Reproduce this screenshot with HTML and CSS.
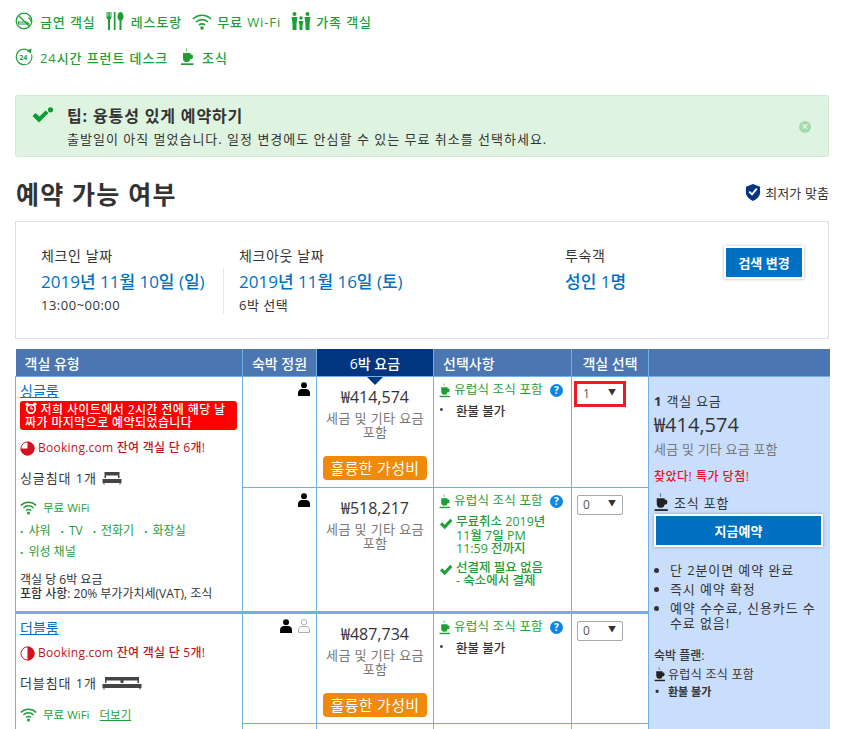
FILE: index.html
```html
<!DOCTYPE html>
<html lang="ko">
<head>
    <meta charset="UTF-8">
    <meta name="viewport" content="width=device-width, initial-scale=1.0">
    <title>예약 가능 여부</title>
    <link rel="stylesheet" href="styles.css">
</head>
<body>
    <svg class="sprites" width="0" height="0">
        <symbol id="i-cup" viewBox="0 0 14 18">
            <path d="M6 0.5c-1 1.2 1 1.6 0 3" fill="none" stroke="currentColor" stroke-width="0.8"/>
            <path d="M2.5 5h7.5v1.500h1.300c1.600 0 1.600 4.500 0 4.500h-1.400c-0.400 2-1.400 3-2.900 3h-1.500c-1.800 0-3-1.500-3-4z"/>
            <rect x="0.500" y="15.300" width="12.500" height="1.700"/>
        </symbol>
        <symbol id="i-check" viewBox="0 0 16 14">
            <path d="M1 7.500l2.500-2.500 3 3 6.500-7 2.500 2.500-9 9.500z"/>
        </symbol>
        <symbol id="i-person" viewBox="0 0 12 14">
            <circle cx="6" cy="3.200" r="3"/>
            <path d="M0 14v-3c0-2.500 2-4 4-4h4c2 0 4 1.500 4 4v3z"/>
        </symbol>
        <symbol id="i-wifi" viewBox="0 0 20 17">
            <path d="M1 6c5-5 13-5 18 0M4 9c3.500-3.300 8.500-3.300 12 0M7 12c2-1.600 4-1.600 6 0" fill="none" stroke="currentColor" stroke-width="1.700"/>
            <circle cx="10" cy="15" r="1.800"/>
        </symbol>
    </svg>

    <div class="page">
        <div class="facilities">
            <span class="facility">
                <svg class="fac-icon" viewBox="0 0 18 18"><circle cx="9" cy="9" r="7.800" fill="none" stroke="currentColor" stroke-width="1.200"/><path d="M3.500 3.500l11 11" stroke="currentColor" stroke-width="1.200"/><path d="M3.500 10h8.500l2 2h-10.500zM13 6c2 0 2.500 1.500 2.500 3.500" fill="none" stroke="currentColor" stroke-width="1.100"/></svg>
                <span>금연 객실</span>
            </span>
            <span class="facility">
                <svg class="fac-icon" viewBox="0 0 18 18"><path d="M0.500 0v5c0 1.500 1 2 1.500 2.500v10.500h2v-10.500c.5-.5 1.500-1 1.500-2.500v-5h-1v4.500h-.7v-4.500h-1.600v4.500h-.7v-4.500zM7.800 0h1.700v18h-1.700zM14.500 0c2 0 3 2.500 3 5 0 2-1 3-2 3.500v9.500h-2v-9.500c-1-.5-2-1.500-2-3.500 0-2.500 1-5 3-5z"/></svg>
                <span>레스토랑</span>
            </span>
            <span class="facility tight">
                <svg class="fac-icon fac-wifi"><use href="#i-wifi"/></svg>
                <span>무료 Wi-Fi</span>
            </span>
            <span class="facility tight">
                <svg class="fac-icon fac-family" viewBox="0 0 20 18"><circle cx="3.500" cy="2" r="2"/><circle cx="10" cy="6" r="1.800"/><circle cx="16.500" cy="2" r="2"/><path d="M0.500 5h6l-1 7v6h-4v-6zM7.500 9h5l-1 4.500v4.500h-3v-4.500zM13.500 5h6l-1 7v6h-4v-6z"/></svg>
                <span>가족 객실</span>
            </span>
            <span class="facility">
                <svg class="fac-icon" viewBox="0 0 18 18"><path d="M13.500 2.500a7.800 7.800 0 1 0 3 4" fill="none" stroke="currentColor" stroke-width="1.100"/><path d="M11.500 2.800l5-2.300-.5 5z"/><text class="fac-24" x="4.300" y="11.500">24</text></svg>
                <span>24시간 프런트 데스크</span>
            </span>
            <span class="facility">
                <svg class="fac-icon fac-cup"><use href="#i-cup"/></svg>
                <span>조식</span>
            </span>
        </div>

        <div class="tip">
            <svg class="tip-check" viewBox="0 0 22 16"><path d="M0.500 9l3-3 4 3.500 6-6 3 2.500-9.500 9.500z"/><circle cx="18.500" cy="2.800" r="2.600"/></svg>
            <div class="tip-text">
                <strong>팁: 융통성 있게 예약하기</strong>
                <p>출발일이 아직 멀었습니다. 일정 변경에도 안심할 수 있는 무료 취소를 선택하세요.</p>
            </div>
            <span class="tip-close">×</span>
        </div>

        <div class="avail-head">
            <h1>예약 가능 여부</h1>
            <span class="best-price">
                <svg viewBox="0 0 16 18" width="16" height="17"><path d="M8 0l7.500 3v6c0 4-3.500 7-7.500 9-4-2-7.500-5-7.500-9v-6z" fill="#003580"/><path d="M4 8l3 3 5-6" fill="none" stroke="#fff" stroke-width="2"/></svg>
                <span>최저가 맞춤</span>
            </span>
        </div>

        <div class="search-box">
            <div class="search-col col-in">
                <div class="search-label">체크인 날짜</div>
                <div class="search-value">2019년 11월 10일 (일)</div>
                <div class="search-note">13:00~00:00</div>
            </div>
            <div class="search-col col-out">
                <div class="search-label">체크아웃 날짜</div>
                <div class="search-value">2019년 11월 16일 (토)</div>
                <div class="search-note">6박 선택</div>
            </div>
            <div class="search-col col-guest">
                <div class="search-label">투숙객</div>
                <div class="search-value">성인 1명</div>
            </div>
            <button class="change-btn">검색 변경</button>
        </div>

        <table class="rooms">
            <colgroup>
                <col class="c-type"><col class="c-occ"><col class="c-price"><col class="c-opt"><col class="c-sel"><col class="c-book">
            </colgroup>
            <thead>
                <tr>
                    <th>객실 유형</th>
                    <th class="th-center">숙박 정원</th>
                    <th class="th-price">6박 요금</th>
                    <th>선택사항</th>
                    <th class="th-center">객실 선택</th>
                    <th></th>
                </tr>
            </thead>
            <tbody>
                <tr class="row-a">
                    <td class="room-cell" rowspan="2">
                        <a class="room-name" href="#">싱글룸</a>
                        <div class="urgent">
                            <svg viewBox="0 0 14 14" width="12" height="12"><circle cx="7" cy="8" r="5" fill="none" stroke="#fff" stroke-width="2"/><path d="M7 5v3h2.500" fill="none" stroke="#fff" stroke-width="1.300"/><circle cx="2.500" cy="2.500" r="2" fill="#fff"/><circle cx="11.500" cy="2.500" r="2" fill="#fff"/></svg>
                            저희 사이트에서 2시간 전에 해당 날짜가 마지막으로 예약되었습니다
                        </div>
                        <div class="left-rooms">
                            <svg viewBox="0 0 16 16" width="15" height="15"><circle cx="8" cy="8" r="7" fill="#fff" stroke="#d4111e"/><path d="M8 8v-7.500a7.500 7.500 0 1 1-7.500 7.500z" fill="#d4111e"/></svg>
                            <span>Booking.com 잔여 객실 단 6개!</span>
                        </div>
                        <div class="bed">
                            <span>싱글침대 1개</span>
                            <svg viewBox="0 0 20 14" width="20" height="14"><path d="M2.500 1h15v6h-1.500v-2.500h-12v2.500h-1.500z"/><path d="M0.500 8h19v4h-1v1.500h-1v-1.500h-15v1.500h-1v-1.500h-1z"/></svg>
                        </div>
                        <div class="wifi">
                            <svg class="wifi-icon"><use href="#i-wifi"/></svg>
                            <span>무료 WiFi</span>
                        </div>
                        <ul class="amenities">
                            <li>샤워</li><li>TV</li><li>전화기</li><li>화장실</li><li>위성 채널</li>
                        </ul>
                        <div class="rate-note">
                            객실 당 6박 요금<br>
                            <b>포함 사항:</b> 20% 부가가치세(VAT), 조식
                        </div>
                    </td>
                    <td class="occ"><svg class="person"><use href="#i-person"/></svg></td>
                    <td class="price active">
                        <div class="price-val">₩414,574</div>
                        <div class="price-tax">세금 및 기타 요금 포함</div>
                        <div class="deal">훌륭한 가성비</div>
                    </td>
                    <td class="opt">
                        <div class="breakfast">
                            <svg class="cup"><use href="#i-cup"/></svg>
                            <span>유럽식 조식 포함</span>
                            <span class="help">?</span>
                        </div>
                        <div class="no-refund">환불 불가</div>
                    </td>
                    <td class="sel">
                        <div class="sel-mark"><div class="picker"><span>1</span><i>▼</i></div></div>
                    </td>
                    <td class="book" rowspan="4">
                        <div class="book-count"><b>1</b> 객실 요금</div>
                        <div class="book-price">₩414,574</div>
                        <div class="book-tax">세금 및 기타 요금 포함</div>
                        <div class="book-deal">찾았다! 특가 당첨!</div>
                        <div class="book-meal">
                            <svg class="cup-lg"><use href="#i-cup"/></svg>
                            <span>조식 포함</span>
                        </div>
                        <button class="book-btn">지금예약</button>
                        <ul class="book-points">
                            <li>단 2분이면 예약 완료</li>
                            <li>즉시 예약 확정</li>
                            <li>예약 수수료, 신용카드 수수료 없음!</li>
                        </ul>
                        <div class="plan-title">숙박 플랜:</div>
                        <div class="plan-meal">
                            <svg class="cup"><use href="#i-cup"/></svg>
                            <span>유럽식 조식 포함</span>
                        </div>
                        <div class="plan-refund">환불 불가</div>
                    </td>
                </tr>
                <tr class="row-b">
                    <td class="occ"><svg class="person"><use href="#i-person"/></svg></td>
                    <td class="price">
                        <div class="price-val">₩518,217</div>
                        <div class="price-tax">세금 및 기타 요금 포함</div>
                    </td>
                    <td class="opt">
                        <div class="breakfast">
                            <svg class="cup"><use href="#i-cup"/></svg>
                            <span>유럽식 조식 포함</span>
                            <span class="help">?</span>
                        </div>
                        <div class="perk"><svg class="check"><use href="#i-check"/></svg><span>무료취소 2019년<br>11월 7일 PM<br>11:59 전까지</span></div>
                        <div class="perk"><svg class="check"><use href="#i-check"/></svg><span>선결제 필요 없음<br>- 숙소에서 결제</span></div>
                    </td>
                    <td class="sel"><div class="picker"><span>0</span><i>▼</i></div></td>
                </tr>
                <tr class="row-c">
                    <td class="room-cell" rowspan="2">
                        <a class="room-name" href="#">더블룸</a>
                        <div class="left-rooms">
                            <svg viewBox="0 0 16 16" width="15" height="15"><circle cx="8" cy="8" r="7" fill="#fff" stroke="#d4111e"/><path d="M8 .5a7.500 7.500 0 0 1 0 15z" fill="#d4111e"/></svg>
                            <span>Booking.com 잔여 객실 단 5개!</span>
                        </div>
                        <div class="bed">
                            <span>더블침대 1개</span>
                            <svg viewBox="0 0 40 14" width="40" height="14"><path d="M3 1h34v6h-1.500v-2.500h-14v2.500h-3v-2.500h-14v2.500h-1.500z"/><path d="M0.500 8h39v4h-1v1.500h-1v-1.500h-35v1.500h-1v-1.500h-1z"/></svg>
                        </div>
                        <div class="wifi">
                            <svg class="wifi-icon"><use href="#i-wifi"/></svg>
                            <span>무료 WiFi</span>
                            <a class="more" href="#">더보기</a>
                        </div>
                    </td>
                    <td class="occ">
                        <svg class="person"><use href="#i-person"/></svg>
                        <svg class="person person-empty" viewBox="0 0 12 14"><circle cx="6" cy="3.200" r="2.700"/><path d="M0.500 13.500v-2.500c0-2.300 1.500-3.500 3.500-3.500h4c2 0 3.500 1.200 3.500 3.500v2.500z"/></svg>
                    </td>
                    <td class="price">
                        <div class="price-val">₩487,734</div>
                        <div class="price-tax">세금 및 기타 요금 포함</div>
                        <div class="deal">훌륭한 가성비</div>
                    </td>
                    <td class="opt">
                        <div class="breakfast">
                            <svg class="cup"><use href="#i-cup"/></svg>
                            <span>유럽식 조식 포함</span>
                            <span class="help">?</span>
                        </div>
                        <div class="no-refund">환불 불가</div>
                    </td>
                    <td class="sel"><div class="picker"><span>0</span><i>▼</i></div></td>
                </tr>
                <tr class="row-d">
                    <td class="occ"></td>
                    <td class="price"></td>
                    <td class="opt"></td>
                    <td class="sel"></td>
                </tr>
            </tbody>
        </table>
    </div>
</body>
</html>
```

FILE: styles.css
```css
html, body {
    margin: 0;
    height: 729px;
    overflow: hidden;
    background: #fff;
}
body {
    font-family: "Open Sans", "Noto Sans CJK KR", sans-serif;
    font-size: 13px;
    color: #333;
}
.sprites {
    position: absolute;
}
.page {
    padding: 0 14px 0 15px;
}

/* facilities */
.facilities {
    display: flex;
    flex-wrap: wrap;
    width: 400px;
    padding-top: 3px;
    color: #1f9e36;
    font-size: 13px;
    font-weight: 500;
    letter-spacing: 0.9px;
}
.facility {
    display: flex;
    align-items: center;
    gap: 7px;
    height: 36px;
    margin-right: 10px;
}
.facility.tight {
    gap: 5px;
}
.fac-icon {
    width: 18px;
    height: 18px;
    fill: #1f9e36;
}
.fac-wifi {
    width: 20px;
    height: 17px;
}
.fac-family {
    width: 20px;
}
.fac-cup {
    width: 15px;
    height: 18px;
    margin-left: 2px;
}
.fac-24 {
    font-size: 7px;
    font-weight: 700;
    letter-spacing: 0;
}

/* tip */
.tip {
    display: flex;
    align-items: flex-start;
    height: 60px;
    margin-top: 20px;
    background: #dff4e0;
    border: 1px solid #cfe9d1;
    border-radius: 3px;
}
.tip-check {
    width: 22px;
    height: 16px;
    margin: 11px 13px 0 16px;
    fill: #0d9b33;
}
.tip-text {
    flex: 1;
    padding-top: 8px;
}
.tip-text strong {
    display: block;
    font-size: 16px;
    line-height: 24px;
    font-weight: 700;
    letter-spacing: 0.85px;
    color: #333;
}
.tip-text p {
    margin: 2px 0 0;
    font-size: 13px;
    line-height: 18px;
    letter-spacing: 1px;
}
.tip-close {
    width: 12px;
    height: 12px;
    margin: 25px 17px 0 0;
    border-radius: 50%;
    background: #a5d8ac;
    color: #dff4e0;
    font-size: 12px;
    font-weight: 700;
    line-height: 12px;
    text-align: center;
}

/* heading */
.avail-head {
    display: flex;
    align-items: center;
    justify-content: space-between;
    height: 64px;
}
.avail-head h1 {
    margin: 7px 0 0 1px;
    font-size: 25px;
    font-weight: 700;
    letter-spacing: 1.200px;
    color: #333;
}
.best-price {
    display: flex;
    align-items: center;
    gap: 4px;
    margin-top: 7px;
    font-size: 13px;
    letter-spacing: 0.1px;
}

/* search summary */
.search-box {
    display: flex;
    align-items: flex-start;
    height: 116px;
    background: #fff;
    border: 1px solid #dedede;
}
.search-col {
    padding-top: 24px;
}
.col-in {
    width: 182px;
    padding-left: 25px;
    height: 66px;
}
.col-out {
    width: 326px;
    padding-left: 15px;
    border-left: 1px solid #e6e6e6;
    margin-top: 46px;
    padding-top: 0;
}
.col-out .search-label {
    margin-top: -22px;
}
.col-guest {
    width: 159px;
}
.search-label {
    font-size: 14px;
    line-height: 20px;
    letter-spacing: 0.6px;
}
.search-value {
    margin-top: 5px;
    font-size: 17px;
    line-height: 22px;
    color: #0071c2;
    font-weight: 500;
}
.search-note {
    margin-top: 3px;
    font-size: 13px;
    line-height: 18px;
    letter-spacing: 0.5px;
}
.change-btn, .book-btn {
    background: #0071c2;
    color: #fff;
    border: 2px solid #fff;
    box-shadow: 0 0 3px rgba(0,0,0,0.3);
    font-family: inherit;
    font-weight: 700;
    cursor: pointer;
}
.change-btn {
    width: 80px;
    height: 33px;
    margin-top: 24px;
    padding: 0;
    font-size: 13px;
}

/* room table */
.rooms {
    width: 814px;
    margin-top: 10px;
    table-layout: fixed;
    border-collapse: collapse;
}
.c-type { width: 227px; }
.c-occ { width: 74px; }
.c-price { width: 117px; }
.c-opt { width: 138px; }
.c-sel { width: 77px; }
.c-book { width: 181px; }
.rooms th {
    height: 27px;
    padding: 0 0 0 9px;
    background: #4b76b1;
    border: 1px solid #6fb0ea;
    border-top: none;
    color: #fff;
    font-size: 14px;
    font-weight: 500;
    text-align: left;
}
.rooms th:first-child { border-left: none; }
.rooms th:last-child { border-right: none; }
.rooms th.th-center {
    padding: 0;
    text-align: center;
}
.rooms th.th-price {
    padding: 0;
    background: #003580;
    text-align: center;
}
.rooms td {
    padding: 0;
    border: 1px solid #6fb0ea;
    vertical-align: top;
}
.row-a { height: 111px; }
.row-b { height: 125px; }
.row-c { height: 111px; }
.row-d { height: 30px; }
.row-c td {
    border-top: 3px solid #6fb0ea;
}

.room-cell {
    padding: 5px 5px 0 4px !important;
}
.room-name {
    display: block;
    font-size: 14px;
    line-height: 18px;
    color: #0071c2;
}
.urgent {
    margin-top: 1px;
    padding: 1px 5px;
    background: #f00;
    border-radius: 3px;
    color: #fff;
    font-size: 12px;
    font-weight: 500;
    line-height: 13px;
    letter-spacing: 0.4px;
}
.left-rooms {
    display: flex;
    align-items: center;
    gap: 3px;
    margin-top: 9px;
    color: #c4111e;
    font-size: 12px;
    font-weight: 500;
    line-height: 18px;
    letter-spacing: 0.25px;
}
.row-c .left-rooms {
    margin-top: 7px;
}
.bed {
    display: flex;
    align-items: center;
    gap: 5px;
    margin-top: 11px;
    font-size: 13px;
    letter-spacing: 0.9px;
    fill: #444;
}
.wifi {
    display: flex;
    align-items: center;
    gap: 6px;
    margin-top: 12px;
    color: #1f9e36;
    font-size: 11.5px;
}
.row-c .wifi {
    margin-top: 14px;
}
.wifi-icon {
    width: 17px;
    height: 15px;
    fill: #1f9e36;
}
.more {
    margin-left: 4px;
    color: #1f9e36;
}
.amenities {
    display: flex;
    flex-wrap: wrap;
    margin: 6px 0 0;
    padding: 0;
    list-style: none;
    color: #1f9e36;
    font-size: 12px;
    line-height: 20px;
}
.amenities li {
    margin-right: 10px;
}
.amenities li::before {
    content: "•";
    margin-right: 5px;
    font-size: 9px;
}
.rate-note {
    margin-top: 10px;
    font-size: 12px;
    line-height: 14px;
}
.rate-note b {
    font-weight: 500;
}

.occ {
    padding: 5px 6px 0 0 !important;
    text-align: right;
}
.person {
    width: 12px;
    height: 14px;
    fill: #000;
}
.person-empty {
    margin-left: 3px;
    fill: #fff;
    stroke: #999;
    stroke-width: 0.8;
}

.price {
    position: relative;
    padding: 0 6px !important;
    text-align: center;
}
.price.active::before {
    content: "";
    position: absolute;
    top: 0;
    left: 50%;
    margin-left: -8px;
    border: 8px solid transparent;
    border-top-color: #003580;
    border-bottom: none;
}
.price-val {
    margin-top: 9px;
    font-size: 16px;
    line-height: 22px;
}
.price-tax {
    margin-top: 3px;
    color: #777;
    font-size: 13px;
    line-height: 14px;
    letter-spacing: 0.4px;
    word-break: keep-all;
}
.deal {
    margin-top: 17px;
    height: 24px;
    background: #ef8a0b;
    border-radius: 4px;
    color: #fff;
    font-size: 15px;
    line-height: 24px;
    letter-spacing: 0.3px;
}

.opt {
    padding: 4px 6px 0 5px !important;
    font-size: 12.5px;
}
.breakfast {
    display: flex;
    align-items: center;
    gap: 3px;
    color: #1f9e36;
    line-height: 18px;
    letter-spacing: 0.2px;
}
.cup {
    width: 12px;
    height: 15px;
    fill: #1f9e36;
}
.help {
    width: 13px;
    height: 13px;
    margin-left: 4px;
    border-radius: 50%;
    background: #0a86ea;
    color: #fff;
    font-size: 10px;
    font-weight: 700;
    line-height: 13px;
    letter-spacing: 0;
    text-align: center;
}
.no-refund {
    margin-top: 2px;
    padding-left: 17px;
    position: relative;
    color: #333;
    font-weight: 500;
}
.no-refund::before {
    content: "•";
    position: absolute;
    left: 0;
}
.perk {
    display: flex;
    gap: 3px;
    margin-top: 5px;
    color: #1f9e36;
    font-weight: 500;
    line-height: 13.5px;
}
.perk + .perk {
    margin-top: 5px;
}
.check {
    flex: none;
    width: 14px;
    height: 12px;
    margin-top: 3px;
    fill: #1f9e36;
}

.sel {
    padding: 7px 0 0 5px !important;
}
.picker {
    display: flex;
    justify-content: space-between;
    box-sizing: border-box;
    width: 46px;
    height: 20px;
    padding: 0 6px 0 5px;
    background: #fff;
    border: 1px solid #aaa;
    border-radius: 2px;
    color: #555;
    font-size: 12px;
    line-height: 18px;
}
.picker i {
    color: #333;
    font-size: 8px;
    font-style: normal;
    line-height: 14px;
}
.sel-mark {
    display: inline-block;
    margin: -4px 0 0 -3px;
    border: 3px solid #ed1c24;
}
.sel-mark .picker {
    border-color: transparent;
}

.book {
    padding: 15px 6px 0 5px !important;
    background: #c9defc;
    border-right: none !important;
    border-bottom: none !important;
}
.book-count {
    font-size: 13px;
    line-height: 18px;
    letter-spacing: 0.8px;
}
.book-count b {
    font-weight: 700;
}
.book-price {
    margin-top: 3px;
    font-size: 20px;
    line-height: 24px;
}
.book-tax {
    margin-top: 2px;
    color: #777;
    font-size: 13px;
    line-height: 20px;
    letter-spacing: 0.2px;
}
.book-deal {
    margin-top: 9px;
    color: #e8112d;
    font-size: 12px;
    font-weight: 500;
    line-height: 18px;
    letter-spacing: 0.5px;
}
.book-meal {
    display: flex;
    align-items: center;
    gap: 5px;
    margin-top: 7px;
    fill: #222;
    font-size: 13px;
    line-height: 18px;
    letter-spacing: 0.8px;
}
.cup-lg {
    width: 15px;
    height: 19px;
}
.book-btn {
    display: block;
    width: 169px;
    height: 33px;
    margin-top: 2px;
    padding: 0;
    font-size: 13px;
}
.book-points {
    margin: 16px 0 0;
    padding: 0 0 0 16px;
    font-size: 13px;
    line-height: 15px;
    letter-spacing: 0.9px;
}
.book-points li {
    margin-bottom: 4px;
}
.plan-title {
    margin-top: 15px;
    font-size: 12px;
    font-weight: 500;
}
.plan-meal {
    display: flex;
    align-items: center;
    gap: 2px;
    margin-top: 1px;
    fill: #222;
    font-size: 12px;
    letter-spacing: 0.3px;
}
.plan-meal .cup {
    fill: #222;
}
.plan-refund {
    margin-top: 0;
    padding-left: 14px;
    position: relative;
    font-size: 11px;
    font-weight: 700;
}
.plan-refund::before {
    content: "•";
    position: absolute;
    left: 1px;
}
```
